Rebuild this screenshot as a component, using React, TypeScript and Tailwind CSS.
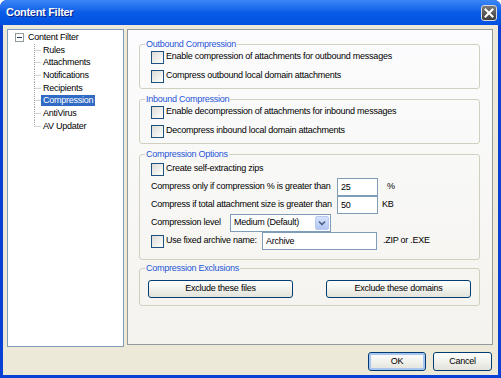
import type { ReactNode } from 'react';

const treeItems = ['Rules', 'Attachments', 'Notifications', 'Recipients', 'Compression', 'AntiVirus', 'AV Updater'];

function CheckBox() {
  return (
    <span className="w-[13px] h-[13px] shrink-0 border border-[#1C5180] bg-linear-to-br from-[#DCDCD7] to-white" />
  );
}

function CheckRow({ label, className = 'h-[16px]' }: { label: string; className?: string }) {
  return (
    <div className={'flex items-center gap-[2px] ' + className}>
      <CheckBox />
      <span>{label}</span>
    </div>
  );
}

function Group({ title, className = '', children }: { title: string; className?: string; children: ReactNode }) {
  return (
    <fieldset className={'border border-[#D0D0BF] rounded-[3px] pl-[5px] pr-[6px] ' + className}>
      <legend className="px-[1px] leading-[10px] text-[#1F55D6]">{title}</legend>
      {children}
    </fieldset>
  );
}

function XpButton({ label, className = '' }: { label: string; className?: string }) {
  return (
    <button
      className={
        'h-[18px] border border-[#003C74] rounded-[3px] bg-linear-to-b from-white to-[#E3E3DB] text-black ' + className
      }
    >
      {label}
    </button>
  );
}

function TextBox({ value, className = '' }: { value: string; className?: string }) {
  return (
    <input
      readOnly
      value={value}
      className={'h-[18px] border border-[#7F9DB9] bg-white px-[3px] outline-none ' + className}
    />
  );
}

export default function App() {
  return (
    <div className="w-[501px] h-[378px] flex flex-col bg-[#0841D3] rounded-t-[7px] overflow-hidden font-['Liberation_Sans',Arial,sans-serif] text-[9px] tracking-[-0.25px] text-black">
      {/* Title bar */}
      <div className="h-[25px] shrink-0 flex items-center justify-between pl-[6px] pr-[4px] bg-linear-to-b from-[#3B86F6] via-[#0A5CE8] to-[#0350E0]">
        <span className="text-white font-bold text-[11px] tracking-[-0.3px] [text-shadow:1px_1px_0_#0A1E8A]">Content Filter</span>
        <div className="w-[16px] h-[16px] rounded-[3px] border border-[#D8D8D8] bg-linear-to-b from-[#7A7A7A] to-[#3E3E3E] flex items-center justify-center">
          <svg width="10" height="10" viewBox="0 0 10 10">
            <path d="M1.5 1.5 L8.5 8.5 M8.5 1.5 L1.5 8.5" stroke="white" strokeWidth="2" strokeLinecap="square" />
          </svg>
        </div>
      </div>

      {/* Client area */}
      <div className="flex-1 mx-[3px] mb-[3px] bg-[#ECE9D8] flex gap-[3px] pt-[4px] pl-[4px] pr-[5px]">
        {/* Tree */}
        <div className="w-[117px] h-[318px] shrink-0 bg-white border border-[#7F9DB9] pt-[1px]">
          <div className="h-[12.7px] flex items-center pl-[7px]">
            <span className="w-[9px] h-[9px] border border-[#919B9C] bg-white flex items-center justify-center">
              <span className="w-[5px] h-px bg-[#1E3A5F]" />
            </span>
            <span className="ml-[4px]">Content Filter</span>
          </div>
          <div className="pl-[26px]">
            {treeItems.map((item, i) => (
              <div key={item} className="h-[12.7px] flex items-center">
                <svg width="7" height="100%" className="h-full shrink-0">
                  <line
                    x1="0.5"
                    y1="0"
                    x2="0.5"
                    y2={i === treeItems.length - 1 ? '50%' : '100%'}
                    stroke="#A0A0A0"
                    strokeDasharray="1 1"
                  />
                  <line x1="0.5" y1="50%" x2="7" y2="50%" stroke="#A0A0A0" strokeDasharray="1 1" />
                </svg>
                <span
                  className={
                    item === 'Compression'
                      ? 'px-[2px] leading-[11px] bg-[#316AC5] text-white'
                      : 'px-[2px] leading-[11px]'
                  }
                >
                  {item}
                </span>
              </div>
            ))}
          </div>
        </div>

        {/* Right side */}
        <div className="flex-1 flex flex-col">
          <div className="h-[316px] border border-[#919B9C] bg-linear-to-b from-[#FCFCFE] to-[#F4F3EE] pt-[9px] pl-[11px] pr-[12px]">
            <Group title="Outbound Compression" className="pb-[4px]">
              <div className="pl-[6px] flex flex-col gap-[3px]">
                <CheckRow label="Enable compression of attachments for outbound messages" />
                <CheckRow label="Compress outbound local domain attachments" />
              </div>
            </Group>

            <Group title="Inbound Compression" className="mt-[5px] pb-[4px]">
              <div className="pl-[6px] flex flex-col gap-[3px]">
                <CheckRow label="Enable decompression of attachments for inbound messages" />
                <CheckRow label="Decompress inbound local domain attachments" />
              </div>
            </Group>

            <Group title="Compression Options" className="mt-[5px] pb-[9px]">
              <div className="pl-[6px] pt-[1px]">
                <CheckRow label="Create self-extracting zips" className="h-[18px]" />
                <div className="h-[18px] flex items-center">
                  <span className="w-[186px] shrink-0">Compress only if compression % is greater than</span>
                  <TextBox value="25" className="w-[41px]" />
                  <span className="ml-[9px]">%</span>
                </div>
                <div className="h-[18px] flex items-center">
                  <span className="w-[186px] shrink-0">Compress if total attachment size is greater than</span>
                  <TextBox value="50" className="w-[41px]" />
                  <span className="ml-[4px]">KB</span>
                </div>
                <div className="h-[18px] flex items-center">
                  <span className="w-[79px] shrink-0">Compression level</span>
                  <div className="w-[101px] h-[18px] border border-[#7F9DB9] bg-white flex items-center justify-between pl-[3px] pr-px">
                    <span>Medium (Default)</span>
                    <span className="w-[14px] h-[14px] rounded-[2px] border border-[#B9C9EF] bg-linear-to-b from-[#D6E2FC] to-[#B2C7F5] flex items-center justify-center">
                      <svg width="8" height="6" viewBox="0 0 8 6">
                        <path d="M1 1.5 L4 4.5 L7 1.5" fill="none" stroke="#4D6185" strokeWidth="1.6" />
                      </svg>
                    </span>
                  </div>
                </div>
                <div className="h-[18px] flex items-center">
                  <div className="w-[111px] shrink-0 flex items-center gap-[2px]">
                    <CheckBox />
                    <span>Use fixed archive name:</span>
                  </div>
                  <TextBox value="Archive" className="w-[115px]" />
                  <span className="ml-[6px]">.ZIP or .EXE</span>
                </div>
              </div>
            </Group>

            <Group title="Compression Exclusions" className="mt-[3px] pb-[7px]">
              <div className="flex justify-between pl-[3px] pr-[2px] mt-[7px]">
                <XpButton label="Exclude these files" className="w-[145px]" />
                <XpButton label="Exclude these domains" className="w-[145px]" />
              </div>
            </Group>
          </div>

          <div className="flex justify-end gap-[7px] mt-[7px] pr-[1px]">
            <XpButton label="OK" className="w-[58px] h-[19px] shadow-[inset_0_0_0_2px_#A8C4F0]" />
            <XpButton label="Cancel" className="w-[59px] h-[19px]" />
          </div>
        </div>
      </div>
    </div>
  );
}
